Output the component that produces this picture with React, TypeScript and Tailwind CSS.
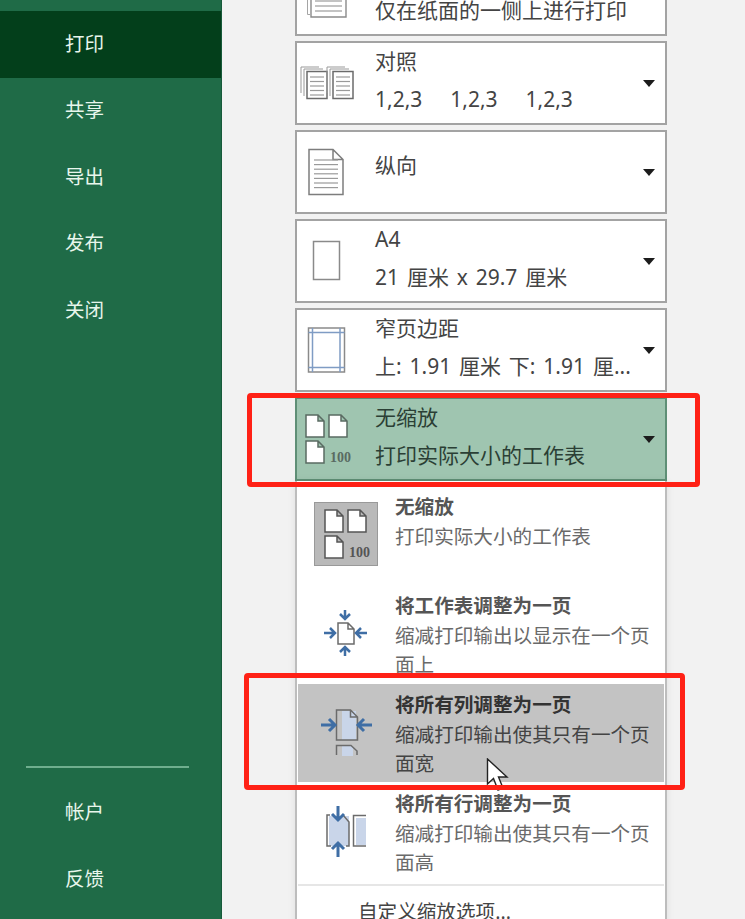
import React from "react";

const BLUE = "#3f6ea5";
const GRAY = "#6b6b6b";

const navTop = ["打印", "共享", "导出", "发布", "关闭"];
const navBottom = ["帐户", "反馈"];

const Caret = () => (
  <svg width="12" height="7" viewBox="0 0 12 7" className="shrink-0">
    <path d="M0 0H12L6 7Z" fill="#1c1c1c" />
  </svg>
);

const Page = ({ x, y, w, h, fold = 7, fill = "none", stroke = GRAY }: any) => (
  <path
    d={`M${x} ${y}H${x + w - fold}L${x + w} ${y + fold}V${y + h}H${x}Z M${x + w - fold} ${y}V${y + fold}H${x + w}`}
    fill={fill}
    stroke={stroke}
    strokeWidth="1.5"
  />
);

// points at (x, y) in the direction dx, dy
const Arrow = ({ x, y, dx, dy, len = 11, head = 5, width = 2.5 }: any) => {
  const bx = x - dx * len;
  const by = y - dy * len;
  const px = -dy * head;
  const py = dx * head;
  return (
    <path
      d={`M${bx} ${by}L${x} ${y}M${x - dx * head + px} ${y - dy * head + py}L${x} ${y}L${x - dx * head - px} ${y - dy * head - py}`}
      fill="none"
      stroke={BLUE}
      strokeWidth={width}
    />
  );
};

const Lines = ({ x, y, w, n, gap }: any) => (
  <g stroke="#9a9a9a" strokeWidth="1.2">
    {Array.from({ length: n }).map((_, i) => (
      <path key={i} d={`M${x} ${y + i * gap}H${x + w}`} />
    ))}
  </g>
);

const Icon = ({ children }: { children: React.ReactNode }) => (
  <svg width="60" height="60" viewBox="0 0 60 60" className="shrink-0 overflow-visible">
    {children}
  </svg>
);

const SidesIcon = () => (
  <Icon>
    <path d="M10.5 30V50.5H13" fill="none" stroke="#a5a5a5" strokeWidth="1" />
    <path d="M14 30V53H49V30" fill="none" stroke="#8a8a8a" strokeWidth="1.4" />
    <Lines x={18} y={37} w={27} n={3} gap={5} />
  </Icon>
);

const CollateIcon = () => (
  <Icon>
    {[4, 30].map((l) => (
      <g key={l}>
        <path d={`M${l} 40V14H${l + 18}`} fill="none" stroke="#999" strokeWidth="1" />
        <path d={`M${l + 3} 43V16H${l + 22}`} fill="none" stroke="#999" strokeWidth="1" />
        <rect x={l + 6} y={18.5} width={20} height={27} fill="#fff" stroke={GRAY} strokeWidth="1.5" />
        <Lines x={l + 9} y={24} w={14} n={5} gap={4.5} />
      </g>
    ))}
  </Icon>
);

const PortraitIcon = () => (
  <Icon>
    <Page x={12} y={7.5} w={34} h={45} fold={10} stroke="#7d7d7d" />
    <Lines x={17} y={18} w={24} n={7} gap={4.6} />
  </Icon>
);

const A4Icon = () => (
  <Icon>
    <rect x={16.5} y={10.5} width={26} height={38} fill="#fff" stroke="#8a8a8a" strokeWidth="1.5" />
  </Icon>
);

const MarginsIcon = () => (
  <Icon>
    <rect x={11.5} y={8} width={36} height={44} fill="#fff" stroke="#8a8a8a" strokeWidth="1.5" />
    <path d="M15.5 8V52M43 8V52M11.5 12.5H47.5M11.5 47.5H47.5" fill="none" stroke="#7f9cc4" strokeWidth="1.5" />
  </Icon>
);

const ScaleIcon = ({ stroke = "#5a6b62" }: { stroke?: string }) => (
  <Icon>
    <Page x={9} y={6} w={18} h={22} fold={6} fill="#fff" stroke={stroke} />
    <Page x={32} y={6} w={18} h={22} fold={6} fill="#fff" stroke={stroke} />
    <Page x={9} y={32} w={18} h={22} fold={6} fill="#fff" stroke={stroke} />
    <text x={33} y={53} fontSize="14" fontWeight="700" fill={stroke} fontFamily="'Liberation Serif', serif">
      100
    </text>
  </Icon>
);

const FitSheetIcon = () => (
  <Icon>
    <Page x={23} y={19} w={16} h={21} fold={6} fill="#fff" />
    <Arrow x={30} y={15} dx={0} dy={1} len={9} />
    <Arrow x={30} y={43} dx={0} dy={-1} len={9} />
    <Arrow x={20} y={29} dx={1} dy={0} len={11} />
    <Arrow x={41} y={29} dx={-1} dy={0} len={11} />
  </Icon>
);

const FitColsIcon = () => (
  <Icon>
    <rect x={27} y={11} width={14} height={29} fill="#c9d5e9" />
    <Page x={21.5} y={10} w={21} h={30} fold={7} />
    <rect x={27} y={46} width={11} height={10} fill="#c9d5e9" />
    <path d="M21.5 55V45.5H36L42 51V55" fill="none" stroke={GRAY} strokeWidth="1.5" />
    <Arrow x={20} y={25} dx={1} dy={0} len={14} head={6} width={3} />
    <Arrow x={43} y={25} dx={-1} dy={0} len={14} head={6} width={3} />
  </Icon>
);

const FitRowsIcon = () => (
  <Icon>
    <rect x={14} y={16} width={20} height={30} fill="#c9d5e9" />
    <path d="M15 15H12V46H16M31 46H34V22L28 15" fill="none" stroke={GRAY} strokeWidth="1.5" />
    <rect x={41} y={18} width={10} height={27} fill="#c9d5e9" />
    <path d="M51 15.5H38.5V46H51" fill="none" stroke={GRAY} strokeWidth="1.5" />
    <Arrow x={23} y={20} dx={0} dy={1} len={14} head={6} width={3} />
    <Arrow x={23} y={43} dx={0} dy={-1} len={14} head={6} width={3} />
  </Icon>
);

const cards = [
  { icon: <SidesIcon />, line2: "仅在纸面的一侧上进行打印", line1: "" },
  { icon: <CollateIcon />, line1: "对照", collate: true },
  { icon: <PortraitIcon />, line1: "纵向", single: true },
  { icon: <A4Icon />, line1: "A4", line2: "21 厘米 x 29.7 厘米" },
  { icon: <MarginsIcon />, line1: "窄页边距", line2: "上: 1.91 厘米 下: 1.91 厘..." },
];

const Card = ({ card }: any) => (
  <div className="flex h-[84px] items-center border-2 border-[#a3a3a3] bg-white pr-[10px] text-[#444]">
    <div className="w-[78px] shrink-0">{card.icon}</div>
    <div className="flex-1 self-stretch">
      {card.single ? (
        <div className="mt-[18px] leading-[30px]">{card.line1}</div>
      ) : (
        <>
          <div className="mt-[3px] h-[30px] leading-[30px]">{card.line1}</div>
          {card.collate ? (
            <div className="mt-[8px] flex gap-[28px] leading-[30px]">
              <span>1,2,3</span>
              <span>1,2,3</span>
              <span>1,2,3</span>
            </div>
          ) : (
            <div className="mt-[8px] leading-[30px] whitespace-nowrap [word-spacing:2.4px]">{card.line2}</div>
          )}
        </>
      )}
    </div>
    <Caret />
  </div>
);

const options = [
  {
    title: "将工作表调整为一页",
    text: "缩减打印输出以显示在一个页面上",
    icon: <FitSheetIcon />,
    h: "h-[100px] pt-[7px]",
    iconMt: "mt-[13px]",
  },
  {
    title: "将所有列调整为一页",
    text: "缩减打印输出使其只有一个页面宽",
    icon: <FitColsIcon />,
    h: "h-[98px] pt-[6px] bg-[#c3c3c3]",
    iconMt: "mt-[10px]",
    hover: true,
  },
  {
    title: "将所有行调整为一页",
    text: "缩减打印输出使其只有一个页面高",
    icon: <FitRowsIcon />,
    h: "h-[100px] pt-[7px]",
    iconMt: "mt-[11px]",
  },
];

const App = () => {
  return (
    <div className="relative flex h-[919px] w-[745px] overflow-hidden bg-[#f2f2f2] text-[21px] [font-family:'Noto_Sans','Noto_Sans_CJK_SC',sans-serif]">
      <aside className="flex w-[222px] shrink-0 flex-col border-r border-[#175a3a] bg-[#1f6b47] pt-[11px] text-[19.5px] text-[#e8f6ec]">
        {navTop.map((n, i) => (
          <div
            key={n}
            className={`flex h-[66.5px] items-center pb-[2px] pl-[65px] ${i === 0 ? "bg-[#033f1b]" : ""}`}
          >
            {n}
          </div>
        ))}
        <div className="mt-auto mb-[11px] ml-[26px] h-[2px] w-[163px] bg-[#6fae8e]" />
        {navBottom.map((n) => (
          <div key={n} className="flex h-[66.5px] items-center pb-[1px] pl-[65px]">
            {n}
          </div>
        ))}
        <div className="h-[7px] shrink-0" />
      </aside>

      <main className="ml-[73px] flex w-[372px] flex-col">
        <div className="-mt-[48px] flex flex-col gap-[5px]">
          {cards.map((c, i) => (
            <Card key={i} card={c} />
          ))}
          <div className="flex h-[84px] items-center border-2 border-[#5f8f76] bg-[#9fc5b0] pr-[10px] text-[#2b3f35]">
            <div className="w-[78px] shrink-0">
              <ScaleIcon />
            </div>
            <div className="flex-1 self-stretch">
              <div className="mt-[3px] h-[30px] leading-[30px]">无缩放</div>
              <div className="mt-[8px] leading-[30px]">打印实际大小的工作表</div>
            </div>
            <Caret />
          </div>
        </div>

        <div className="flex-1 border-x-2 border-[#bdbdbd] bg-white px-px pt-[3px] text-[19.6px] leading-[29.5px] text-[#6a6a6a] shadow-[0_0_8px_rgba(0,0,0,0.08)]">
          <div className="flex h-[100px] pt-[8px]">
            <div className="w-[97px] shrink-0 pl-[16px]">
              <div className="mt-[10px] flex h-[64px] w-[64px] items-center justify-center border border-[#999] bg-[#b9b9b9]">
                <ScaleIcon stroke="#555" />
              </div>
            </div>
            <div className="w-[264px]">
              <div className="font-bold text-[#555]">无缩放</div>
              <div>打印实际大小的工作表</div>
            </div>
          </div>
          {options.map((o) => (
            <div key={o.title} className={`flex ${o.h}`}>
              <div className={`w-[97px] shrink-0 pl-[17px] ${o.iconMt}`}>{o.icon}</div>
              <div className={`w-[264px] ${o.hover ? "text-[#444]" : ""}`}>
                <div className={`font-bold ${o.hover ? "text-[#333]" : "text-[#555]"}`}>{o.title}</div>
                <div>{o.text}</div>
              </div>
            </div>
          ))}
          <div className="mt-[2px] h-[2px] bg-[#e6e6e6]" />
          <div className="mt-[11px] pl-[60px] text-[#444]">自定义缩放选项...</div>
        </div>
      </main>

      <svg width="24" height="34" viewBox="0 0 24 34" className="absolute top-[758px] left-[486px]">
        <path d="M1.5 1V26L7.5 20.5L12 32L17 30L12.5 19H21Z" fill="#fff" stroke="#222" strokeWidth="1.4" />
      </svg>

      <div className="absolute top-[393px] left-[247px] h-[94px] w-[453px] rounded-[4px] border-[5px] border-[#ff2116]" />
      <div className="absolute top-[673px] left-[244px] h-[117px] w-[441px] rounded-[4px] border-[5px] border-[#ff2116]" />
    </div>
  );
};

export default App;
